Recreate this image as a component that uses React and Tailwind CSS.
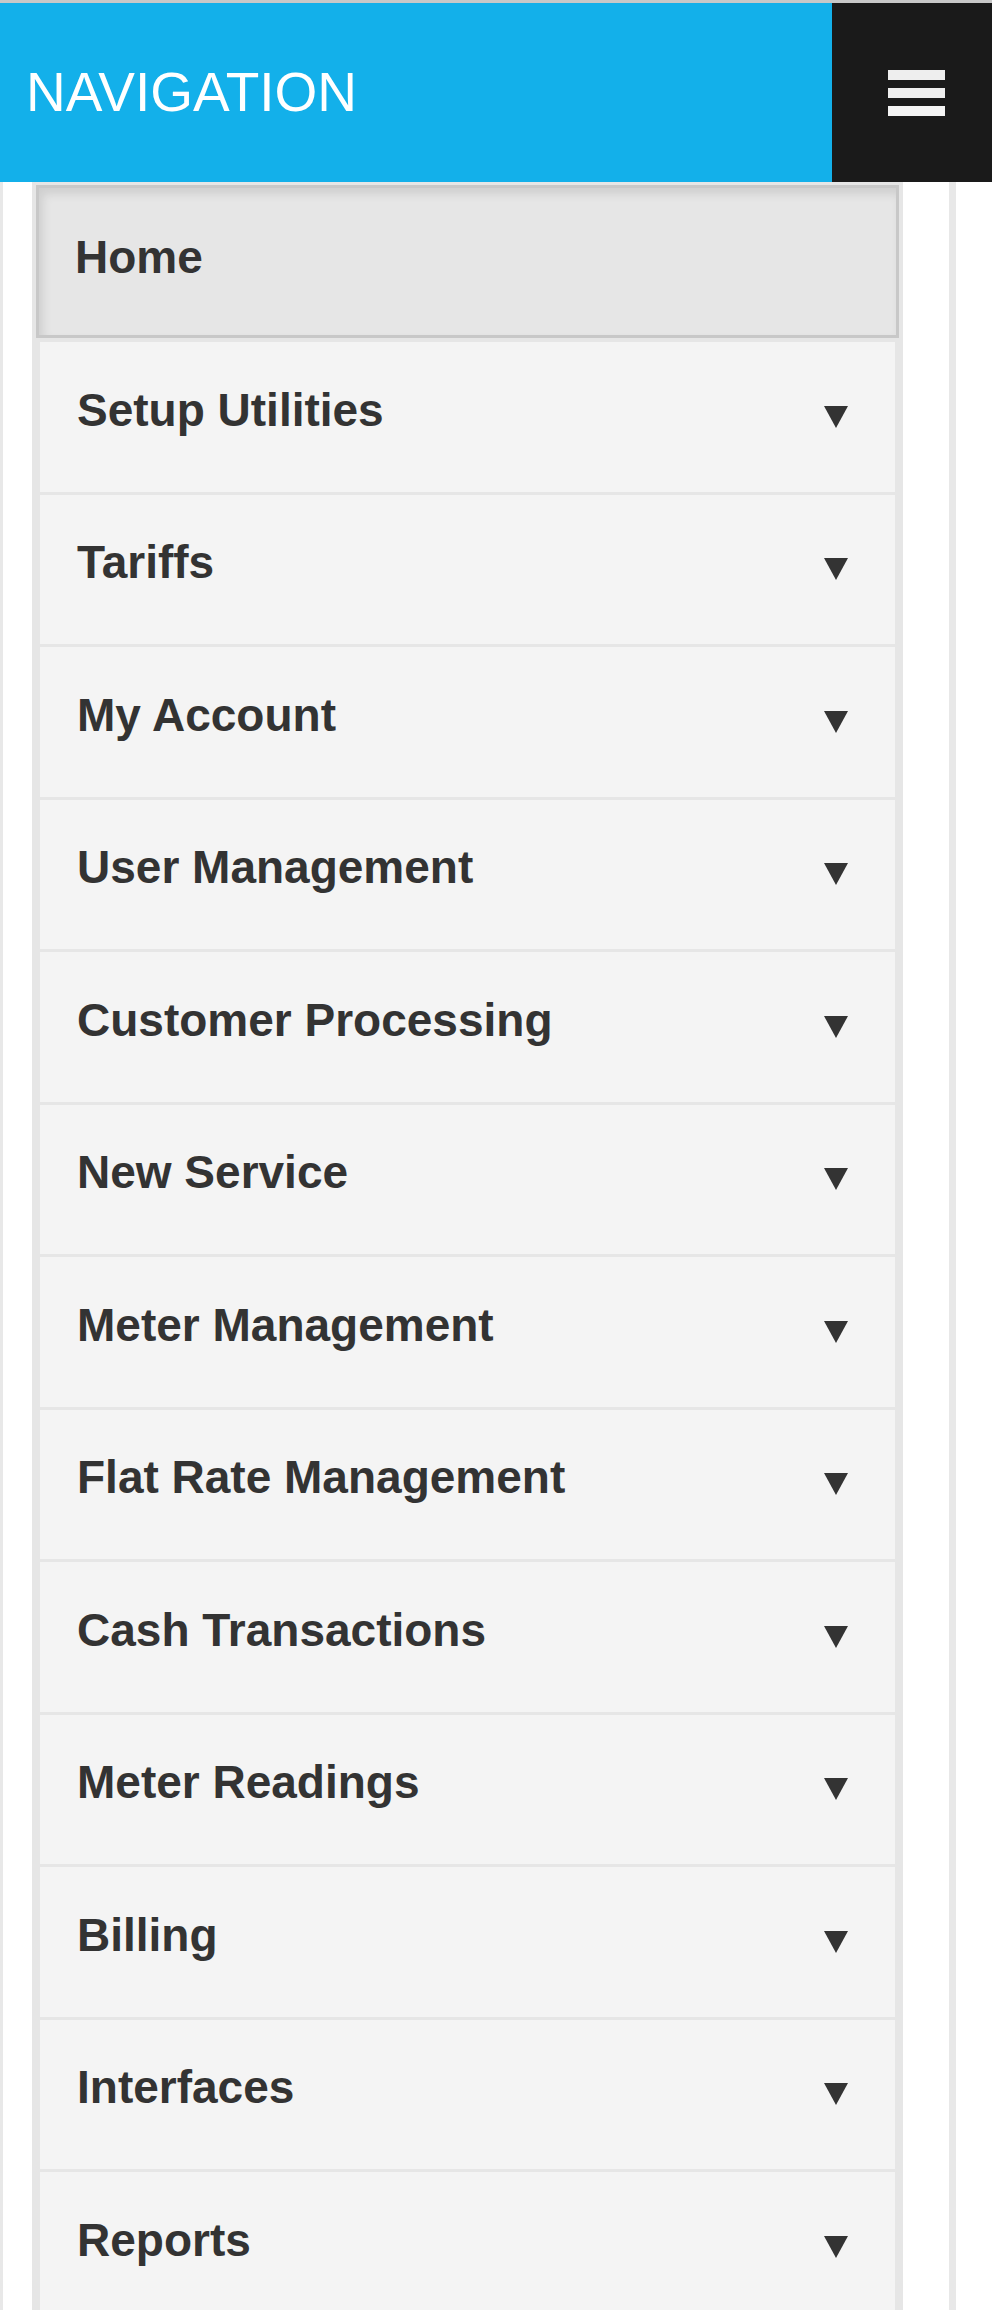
const menuItems = [
  "Setup Utilities",
  "Tariffs",
  "My Account",
  "User Management",
  "Customer Processing",
  "New Service",
  "Meter Management",
  "Flat Rate Management",
  "Cash Transactions",
  "Meter Readings",
  "Billing",
  "Interfaces",
  "Reports",
];

const Caret = () => (
  <svg width="24" height="22" viewBox="0 0 24 22" className="shrink-0">
    <polygon points="0,0 24,0 12,22" fill="#333333" />
  </svg>
);

const NavItem = ({ label }) => (
  <li className="flex h-[152.5px] items-center justify-between border-t-[3px] border-[#e6e6e6] bg-[#f4f4f4] pl-[37px] pr-[47px]">
    <span className="mb-[13px] text-[46px] font-bold text-[#333333]">{label}</span>
    <Caret />
  </li>
);

export default function App() {
  return (
    <div className="w-[992px] bg-white font-['Liberation_Sans',Arial,sans-serif]">
      <header className="flex h-[182px] border-t-[3px] border-[#c8c8c8]">
        <div className="flex flex-1 items-center bg-[#13b0ea] pl-[26px]">
          <span className="text-[55px] leading-none text-white">NAVIGATION</span>
        </div>
        <button
          className="flex w-[160px] flex-col items-center justify-center gap-[8px] bg-[#1a1a1a] pl-[9px]"
          aria-label="Toggle navigation"
        >
          <span className="block h-[10px] w-[57px] bg-[#eeeeee]" />
          <span className="block h-[10px] w-[57px] bg-[#eeeeee]" />
          <span className="block h-[10px] w-[57px] bg-[#f4f4f4]" />
        </button>
      </header>

      <div className="w-[956px] border-l-[3px] border-r-[7px] border-[#e8e8e8] pl-[29px]">
        <ul className="w-[871px] bg-[#e6e6e6] px-[8px] pt-[3px]">
          <li className="-mx-[4px] mb-[1px] flex h-[153px] items-center border-[3px] border-[#c8c8c8] bg-[#e6e6e6] pl-[36px] shadow-[inset_4px_6px_10px_rgba(0,0,0,0.1)]">
            <span className="mb-[8px] text-[46px] font-bold text-[#333333]">Home</span>
          </li>
          {menuItems.map((label) => (
            <NavItem key={label} label={label} />
          ))}
        </ul>
      </div>
    </div>
  );
}
